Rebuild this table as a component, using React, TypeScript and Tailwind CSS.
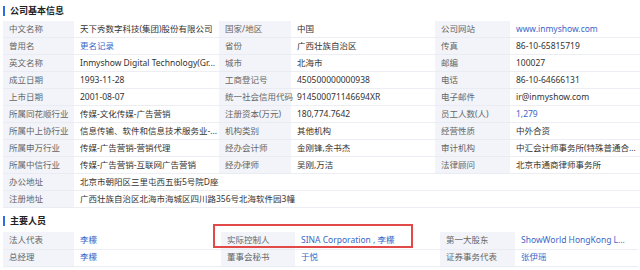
type Cell = { text: string; link?: boolean };
type Row = [string, Cell, string?, Cell?, string?, Cell?];

const c = (text: string, link = false): Cell => ({ text, link });

const basicRows: Row[] = [
  ["中文名称", c("天下秀数字科技(集团)股份有限公司"), "国家/地区", c("中国"), "公司网站", c("www.inmyshow.com", true)],
  ["曾用名", c("更名记录", true), "省份", c("广西壮族自治区"), "传真", c("86-10-65815719")],
  ["英文名称", c("Inmyshow Digital Technology(Gr..."), "城市", c("北海市"), "邮编", c("100027")],
  ["成立日期", c("1993-11-28"), "工商登记号", c("450500000000938"), "电话", c("86-10-64666131")],
  ["上市日期", c("2001-08-07"), "统一社会信用代码", c("914500071146694XR"), "电子邮件", c("ir@inmyshow.com")],
  ["所属同花顺行业", c("传媒-文化传媒-广告营销"), "注册资本(万元)", c("180,774.7642"), "员工人数(人)", c("1,279", true)],
  ["所属中上协行业", c("信息传输、软件和信息技术服务业-..."), "机构类别", c("其他机构"), "经营性质", c("中外合资")],
  ["所属申万行业", c("传媒-广告营销-营销代理"), "经办会计师", c("金刚锋,余书杰"), "审计机构", c("中汇会计师事务所(特殊普通合...")],
  ["所属中信行业", c("传媒-广告营销-互联网广告营销"), "经办律师", c("吴刚,万洁"), "法律顾问", c("北京市通商律师事务所")],
  ["办公地址", c("北京市朝阳区三里屯西五街5号院D座")],
  ["注册地址", c("广西壮族自治区北海市海城区四川路356号北海软件园3幢")],
];

const peopleRows: Row[] = [
  ["法人代表", c("李檬", true), "实际控制人", c("SINA Corporation , 李檬", true), "第一大股东", c("ShowWorld HongKong L...", true)],
  ["总经理", c("李檬", true), "董事会秘书", c("于悦", true), "证券事务代表", c("张伊瑶", true)],
];

function Title({ text }: { text: string }) {
  return (
    <div className="flex items-center h-[20px] pl-[3px]">
      <span className="w-[2px] h-[10px] bg-[#2f6fe4] mr-[5px]" />
      <span className="font-bold text-[9px] text-[#222]">{text}</span>
    </div>
  );
}

function Value({ cell, span }: { cell: Cell; span?: boolean }) {
  return (
    <div
      className={`px-[6px] flex items-center whitespace-nowrap border-b border-[#eceef3] ${
        span ? "col-span-5" : ""
      } ${cell.link ? "text-[#3b66c9]" : "text-[#333]"}`}
    >
      {cell.text}
    </div>
  );
}

function Label({ text }: { text: string }) {
  return (
    <div className="px-[6px] flex items-center whitespace-nowrap bg-[#f2f4f9] text-[#666] border-b border-[#e9ecf3]">
      {text}
    </div>
  );
}

function Table({ rows, cols, rowH }: { rows: Row[]; cols: string; rowH: string }) {
  return (
    <div className={`grid ${cols} ${rowH} ml-[3px] mr-[2px]`}>
      {rows.map((r, i) => {
        const span = r.length === 2;
        return (
          <div key={i} className="contents">
            <Label text={r[0]} />
            <Value cell={r[1]} span={span} />
            {!span && (
              <>
                <Label text={r[2]!} />
                <Value cell={r[3]!} />
                <Label text={r[4]!} />
                <Value cell={r[5]!} />
              </>
            )}
          </div>
        );
      })}
    </div>
  );
}

export default function App() {
  return (
    <div
      className="w-[640px] h-[270px] bg-white text-[8.5px] overflow-hidden"
      style={{ fontFamily: '"Noto Sans", "Noto Sans CJK SC", sans-serif' }}
    >
      <div className="pt-[1px]">
        <Title text="公司基本信息" />
      </div>
      <Table rows={basicRows} cols="grid-cols-[71px_145px_72px_144px_75px_1fr]" rowH="auto-rows-[17px]" />
      <div className="relative mt-[3px]">
        <Title text="主要人员" />
        <div className="mt-[1px]">
          <Table rows={peopleRows} cols="grid-cols-[71px_147px_74px_145px_75px_1fr]" rowH="auto-rows-[17.5px]" />
        </div>
        <div className="absolute left-[213px] top-[13px] w-[200px] h-[24px] border-2 border-[#e24a4a]" />
      </div>
    </div>
  );
}
